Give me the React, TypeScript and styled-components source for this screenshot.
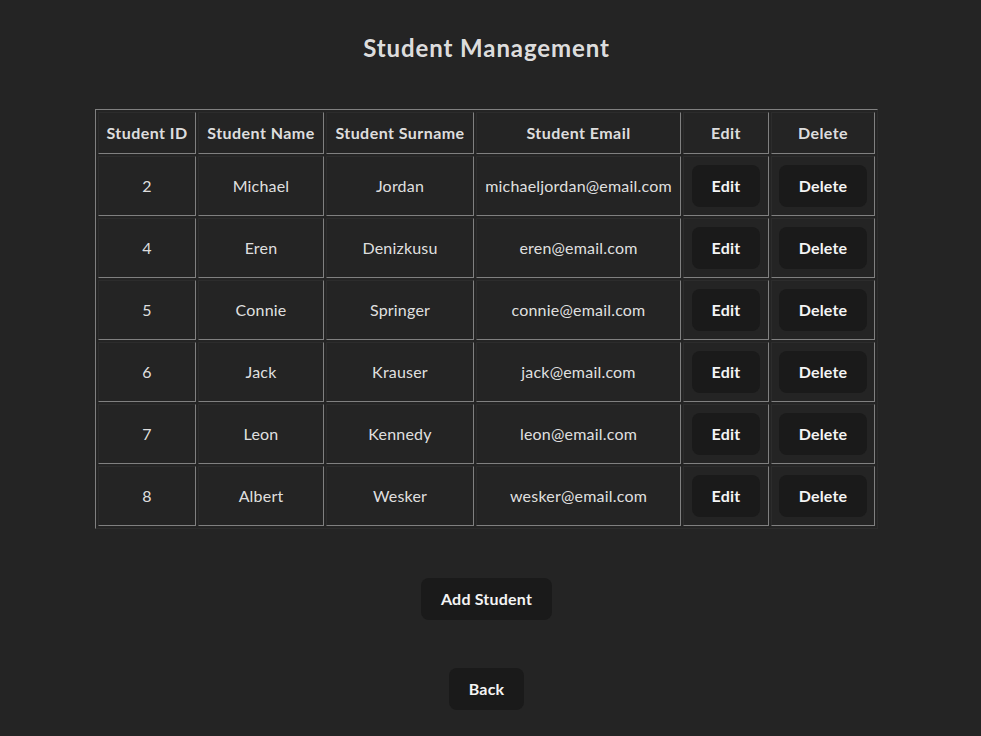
import React from "react";
import styled, { createGlobalStyle } from "styled-components";

const GlobalStyle = createGlobalStyle`
  html, body {
    margin: 0;
    background: #242424;
  }
  body {
    font-family: "Lato", "Noto Sans", sans-serif;
    color: rgba(255, 255, 255, 0.87);
    -webkit-font-smoothing: antialiased;
  }
`;

const Page = styled.main`
  display: flex;
  flex-direction: column;
  align-items: center;
  padding: 30px 8px 0 0;
`;

const Title = styled.h2`
  margin: 0;
  font-size: 24px;
  line-height: 36px;
  font-weight: 700;
  letter-spacing: 0.9px;
`;

const Table = styled.table`
  margin-top: 43px;
  width: 783px;
  table-layout: fixed;
  border-collapse: separate;
  border-spacing: 2px;
  border: 1px outset grey;
`;

const HeadCell = styled.th<{ $w: number }>`
  box-sizing: border-box;
  width: ${(p) => p.$w}px;
  padding: 8px 0;
  border: 1px inset grey;
  font-size: 16px;
  line-height: 24px;
  font-weight: 700;
  letter-spacing: 0.45px;
  text-align: center;
  white-space: nowrap;
`;

const Cell = styled.td`
  box-sizing: border-box;
  height: 60px;
  padding: 8px 0;
  border: 1px inset grey;
  font-size: 16px;
  line-height: 24px;
  letter-spacing: 0.2px;
  text-align: center;
  white-space: nowrap;
`;

const Button = styled.button<{ $gap?: number }>`
  box-sizing: border-box;
  margin-top: ${(p) => p.$gap ?? 0}px;
  height: 42px;
  padding: 0 19px;
  border: 1px solid transparent;
  border-radius: 8px;
  background: #1a1a1a;
  color: #f4f4f4;
  font-family: inherit;
  font-size: 16px;
  font-weight: 700;
  letter-spacing: 0.2px;
  line-height: 20px;
  cursor: pointer;
`;

const columns: [string, number][] = [
  ["Student ID", 98],
  ["Student Name", 126],
  ["Student Surname", 148],
  ["Student Email", 205],
  ["Edit", 86],
  ["Delete", 104],
];

const students = [
  { id: 2, name: "Michael", surname: "Jordan", email: "michaeljordan@email.com" },
  { id: 4, name: "Eren", surname: "Denizkusu", email: "eren@email.com" },
  { id: 5, name: "Connie", surname: "Springer", email: "connie@email.com" },
  { id: 6, name: "Jack", surname: "Krauser", email: "jack@email.com" },
  { id: 7, name: "Leon", surname: "Kennedy", email: "leon@email.com" },
  { id: 8, name: "Albert", surname: "Wesker", email: "wesker@email.com" },
];

export default function App() {
  return (
    <>
      <GlobalStyle />
      <Page>
        <Title>Student Management</Title>
        <Table>
          <thead>
            <tr>
              {columns.map(([label, w]) => (
                <HeadCell key={label} $w={w}>
                  {label}
                </HeadCell>
              ))}
            </tr>
          </thead>
          <tbody>
            {students.map((s) => (
              <tr key={s.id}>
                <Cell>{s.id}</Cell>
                <Cell>{s.name}</Cell>
                <Cell>{s.surname}</Cell>
                <Cell>{s.email}</Cell>
                <Cell>
                  <Button>Edit</Button>
                </Cell>
                <Cell>
                  <Button>Delete</Button>
                </Cell>
              </tr>
            ))}
          </tbody>
        </Table>
        <Button $gap={49}>Add Student</Button>
        <Button $gap={48}>Back</Button>
      </Page>
    </>
  );
}
